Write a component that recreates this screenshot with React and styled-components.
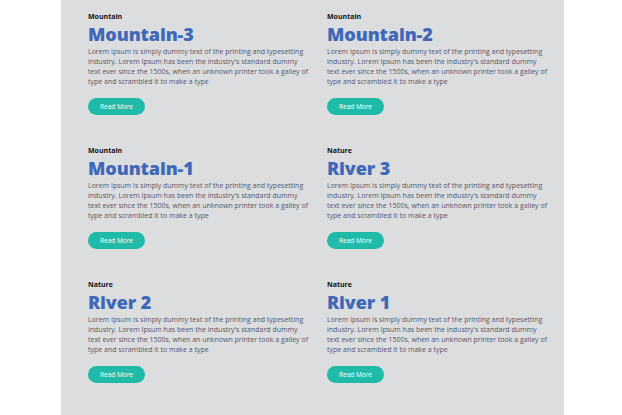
import React from "react";
import styled, { createGlobalStyle } from "styled-components";

const posts = [
  { id: 1, category: "Mountain", title: "Mountain-3" },
  { id: 2, category: "Mountain", title: "Mountain-2" },
  { id: 3, category: "Mountain", title: "Mountain-1" },
  { id: 4, category: "Nature", title: "River 3" },
  { id: 5, category: "Nature", title: "River 2" },
  { id: 6, category: "Nature", title: "River 1" },
];

const lorem =
  "Lorem Ipsum is simply dummy text of the printing and typesetting industry. Lorem Ipsum has been the industry's standard dummy text ever since the 1500s, when an unknown printer took a galley of type and scrambled it to make a type";

const PostCard = ({ category, title }) => {
  return (
    <Card>
      <Category>{category}</Category>
      <Title>{title}</Title>
      <Excerpt>{lorem}</Excerpt>
      <ReadMore>Read More</ReadMore>
    </Card>
  );
};

export default function App() {
  return (
    <>
      <GlobalStyle />
      <Page>
        <Panel>
          {posts.map((p) => (
            <PostCard key={p.id} category={p.category} title={p.title} />
          ))}
        </Panel>
      </Page>
    </>
  );
}

const GlobalStyle = createGlobalStyle`
  body {
    margin: 0;
    background: #ffffff;
    font-family: "Open Sans", "Liberation Sans", sans-serif;
  }
`;

const Page = styled.div`
  display: flex;
  padding-left: 61px;
  height: 415px;
  overflow: hidden;
`;

const Panel = styled.div`
  width: 503px;
  background-color: #dcdddf;
  box-sizing: border-box;
  padding: 12px 0 32px 27px;
  display: grid;
  grid-template-columns: 239px 228px;
  align-content: start;
  row-gap: 31px;
`;

const Card = styled.div`
  display: flex;
  flex-direction: column;
  align-items: flex-start;
`;

const Category = styled.div`
  font-size: 7px;
  line-height: 10px;
  font-weight: 700;
  color: #111111;
`;

const Title = styled.h2`
  margin: 1px 0 0;
  font-size: 18px;
  line-height: 22px;
  font-weight: 800;
  color: #3f68b8;
  letter-spacing: -0.1px;
`;

const Excerpt = styled.p`
  margin: 2px 0 0;
  width: 221px;
  font-size: 7px;
  line-height: 10px;
  color: #55566a;
`;

const ReadMore = styled.button`
  margin-top: 11px;
  width: 57px;
  height: 17px;
  border: none;
  border-radius: 9px;
  background-color: #20bba8;
  color: #ffffff;
  font-family: "Open Sans", "Liberation Sans", sans-serif;
  font-size: 6.5px;
  font-weight: 500;
  padding: 0;
  cursor: pointer;
`;
